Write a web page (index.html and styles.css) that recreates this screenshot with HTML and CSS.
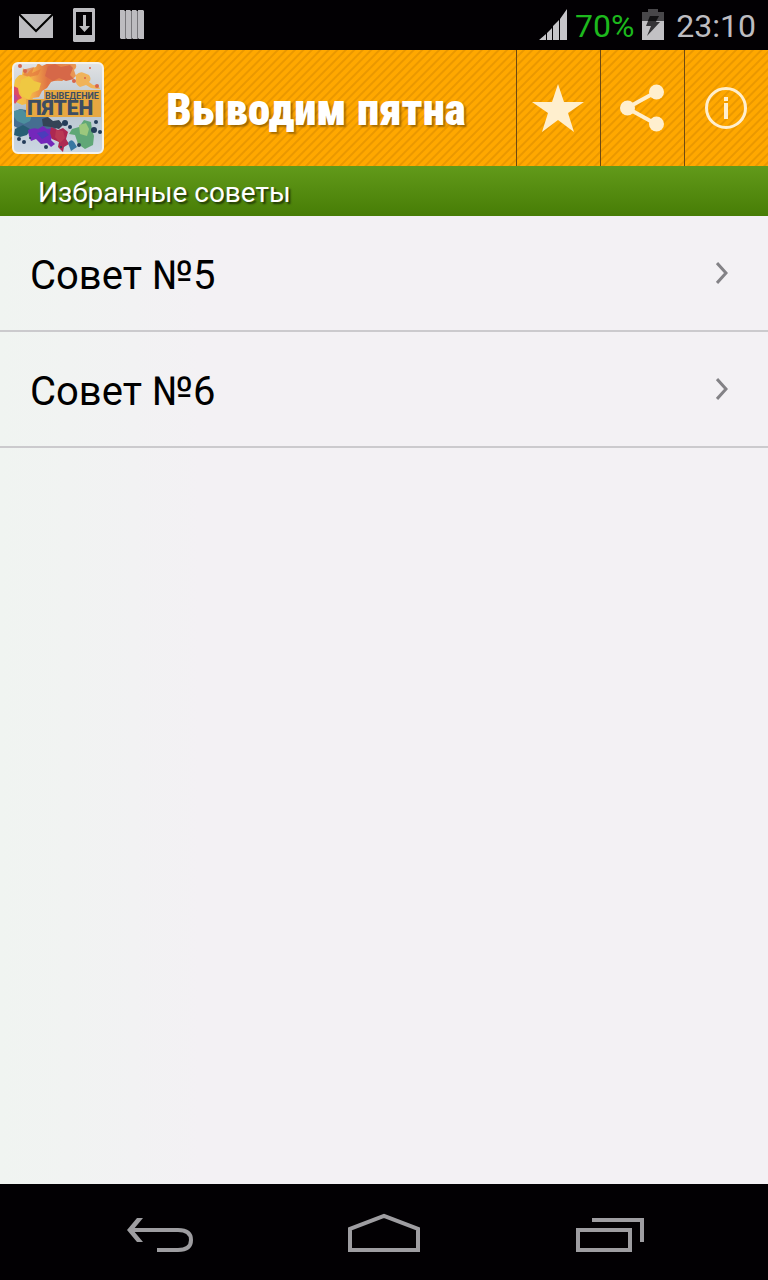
FILE: index.html
```html
<!doctype html>
<html lang="ru">
  <head>
    <meta charset="UTF-8" />
    <meta name="viewport" content="width=device-width, initial-scale=1.0" />
    <title>Выводим пятна</title>
    <link rel="stylesheet" href="styles.css">
  </head>
  <body>
    <!-- Status bar -->
    <div class="status-bar">
      <div class="status-notifications">
        <svg width="34" height="34" viewBox="0 0 34 34">
          <path d="M0 6h34v24H0z" fill="#bdbcc0" />
          <path d="M0 6l17 17L34 6" fill="none" stroke="#000" stroke-width="2" />
        </svg>
        <svg width="22" height="34" viewBox="0 0 22 34">
          <path fill="#bdbcc0" fill-rule="evenodd" d="M1 0h20l1 1v32l-1 1H1l-1-1V1zM3 4v23h16V4z" />
          <path fill="#bdbcc0" d="M10 7h3v11h4l-5.500 6L6 18h4z" />
        </svg>
        <svg width="24" height="34" viewBox="0 0 24 34">
          <path fill="#bdbcc0" d="M0 2h4l1 1v28H1l-1-1zM6 2h4l1 1v28H7l-1-1zM12 2h4l1 1v28h-4l-1-1zM18 2h5l1 1v28h-5l-1-1z" />
          <path stroke="#77767a" d="M5.500 3v28M11.500 3v28M17.500 3v28" />
        </svg>
      </div>
      <div class="status-system">
        <svg width="28" height="34" viewBox="0 0 28 34">
          <path fill="#c6c5c9" d="M0 32L7 26v6zM8 25l5-5v12H8zM14 18l6-6v20h-6zM21 11l7-10v31h-7z" />
        </svg>
        <span class="battery-percent">70%</span>
        <svg width="22" height="34" viewBox="0 0 22 34">
          <path fill="#48474a" d="M6 1h10v3h6v9H0V4h6z" />
          <path fill="#c2c1c4" d="M0 13h22v19H0z" />
          <path fill="#353437" d="M8 8h9l-3 6h4L5 28l4-10H4z" />
          <path fill="#121214" d="M8 8h9l-3 5H6z" />
        </svg>
        <span class="clock">23:10</span>
      </div>
    </div>

    <!-- Header -->
    <header class="header">
      <svg class="logo" viewBox="0 0 92 92" role="img" aria-label="Выведение пятен">
        <defs>
          <clipPath id="logoClip"><rect x="1" y="1" width="90" height="90" rx="5" /></clipPath>
          <linearGradient id="logoBg" x1="0" y1="0" x2="0" y2="1">
            <stop offset="0" stop-color="#e2e3e5" />
            <stop offset="0.500" stop-color="#b9c4cd" />
            <stop offset="1" stop-color="#ccd8e3" />
          </linearGradient>
          <linearGradient id="warm" x1="0" y1="0" x2="1" y2="0">
            <stop offset="0" stop-color="#f3c743" />
            <stop offset="0.300" stop-color="#f4b04b" />
            <stop offset="0.550" stop-color="#df7344" />
            <stop offset="1" stop-color="#ea9a55" />
          </linearGradient>
        </defs>
        <g clip-path="url(#logoClip)">
          <path fill="url(#logoBg)" d="M0 0h92v92H0z" />
          <!-- red, orange and yellow splashes -->
          <path fill="url(#warm)" d="M3 18q4-6 7-5l1-7 4 6q5-7 9-7l2-4 4 3q7-4 13-2l4-2 10 2 6-1q3 4-1 7l2 6q-4 5-9 2l-5 3q-7-1-11 1l-4 6-5 3-3 6-6 1-3 5-8 2-6-3-1-8q-4-3-1-8z" />
          <path fill="#d66848" d="M36 4l7-2 6 3 9-2 3 3-3 7 4 4-8 2-7-3-6 3-8-5z" />
          <path fill="#e4793f" opacity="0.700" d="M14 7l8-2-2 6 9-4-3 6-9 2-6-2z" />
          <path fill="#f0b35a" d="M64 13q4-4 8-2l5 2q3 4 0 7l4 3q6 0 7 4-4 0-9-1l-5-3-6 2q-5-3-4-7z" />
          <path fill="#efc842" d="M9 18l8-4 5 5 7 2-2 7-7 3-3 7-7-4-3-7z" />
          <path fill="#dd4b65" d="M1 24l5 2 1 6 3 4-4 2-3 4-3-5z" />
          <path fill="#b9499b" d="M0 32l4 1 2 4-6 3z" />
          <g fill="#d7654b">
            <circle cx="8" cy="4" r="2" /><circle cx="13" cy="9" r="2" /><circle cx="78" cy="6" r="1" />
            <circle cx="73" cy="16" r="1" /><circle cx="85" cy="24" r="2" /><circle cx="62" cy="19" r="2" />
          </g>
          <!-- teal and blue splashes -->
          <path fill="#456e91" d="M1 50l7-3 6 1 5-3 8 7 8 2 4 7 8-2 4 4-7 3-3 6-7-3-7 4-5-4-7 3-6-4-7-4z" />
          <path fill="#4c8f9d" d="M2 49l8-2 5 5 5 1-2 6-6 3-7-3-3-4z" />
          <path fill="#285e74" d="M3 67l8-4 7 4-3 6-7 2-6-2z" />
          <path fill="#344456" d="M30 57l6-2 5 4 6-1 4 5-4 4-8-2-8-1z" />
          <!-- violet, crimson and green splashes -->
          <path fill="#7427bb" d="M16 68q6-3 10-1l5-3 4 3 7-1q2 4-1 7l-2 5 4 4-4 3-4-4-6 1-5-5-5 2-2-5z" />
          <path fill="#4b3cbb" d="M25 71l8-2 4 4-7 4z" />
          <path fill="#ad2851" d="M39 65l7 3 5-2 5 4-2 7 3 5-5 3-1 5-5-5 1-5-7-3-2-6z" />
          <path fill="#ba3954" d="M44 68l7 1 2 7-5 5-5-6z" />
          <path fill="#60a777" d="M60 67l7-2 5-7 7 2 1 8 2 6-1 9-8 4-7-5-3-9-6-1z" />
          <path fill="#9bc87d" d="M67 63l7-2 3 6-2 7-7-2z" />
          <path fill="#3977a2" d="M56 81q3-5 6-1l3 5-6 4z" />
          <g fill="#243d59">
            <circle cx="82" cy="68" r="3" /><circle cx="88" cy="70" r="2" /><circle cx="84" cy="60" r="2" />
            <circle cx="53" cy="61" r="3" /><circle cx="58" cy="65" r="2" /><circle cx="12" cy="80" r="2" />
            <circle cx="7" cy="77" r="2" /><circle cx="18" cy="76" r="1" /><circle cx="67" cy="83" r="2" />
            <circle cx="49" cy="85" r="1" /><circle cx="34" cy="85" r="2" />
          </g>
          <path fill="#e7a841" d="M32 28h57v27H14V37h18z" />
        </g>
        <rect x="1" y="1" width="90" height="90" rx="5" fill="none" stroke="#f4f2ec" stroke-width="2" />
        <text class="logo-small" x="33" y="37">ВЫВЕДЕНИЕ</text>
        <text class="logo-large" x="15" y="53">ПЯТЕН</text>
      </svg>
      <h1 class="title">Выводим пятна</h1>
      <button class="header-button" type="button" aria-label="Избранное">
        <svg width="52" height="52" viewBox="0 0 52 52">
          <path fill="#ffefce" d="M26 2l6 18h20L36 31l6 19-16-12-16 12 6-19L0 20h20z" />
        </svg>
      </button>
      <button class="header-button" type="button" aria-label="Поделиться">
        <svg width="52" height="52" viewBox="0 0 52 52">
          <path d="M40 10L11 26l29 16" fill="none" stroke="#ffefce" stroke-width="4" />
          <g fill="#ffefce"><circle cx="40.500" cy="10" r="7.500" /><circle cx="11.500" cy="26" r="7.500" /><circle cx="40.500" cy="42" r="7.500" /></g>
        </svg>
      </button>
      <button class="header-button" type="button" aria-label="Информация">
        <svg width="52" height="52" viewBox="0 0 52 52">
          <circle cx="26" cy="26" r="19.500" fill="none" stroke="#ffefce" stroke-width="3" />
          <path fill="#ffefce" d="M24 15h4v4h-4zM24 21h4v16h-4z" />
        </svg>
      </button>
    </header>

    <h2 class="section-title">Избранные советы</h2>

    <!-- Favourite tips -->
    <main class="tips">
      <a class="tip" href="#tip-5">
        <span>Совет №5</span>
        <svg width="12" height="22" viewBox="0 0 12 22"><path d="M1 1l9 10-9 10" /></svg>
      </a>
      <a class="tip" href="#tip-6">
        <span>Совет №6</span>
        <svg width="12" height="22" viewBox="0 0 12 22"><path d="M1 1l9 10-9 10" /></svg>
      </a>
    </main>

    <!-- System navigation -->
    <nav class="nav-bar">
      <button class="nav-button" type="button" aria-label="Назад">
        <svg width="72" height="48" viewBox="0 0 72 48">
          <path d="M5 22h49q13 0 13 10t-13 10H33" />
          <path fill="#9e9da1" stroke="none" d="M13 10h6L9 22l10 12h-6L3 22z" />
        </svg>
      </button>
      <button class="nav-button" type="button" aria-label="Домой">
        <svg width="72" height="48" viewBox="0 0 72 48">
          <path d="M2 42V21L36 8l34 13v21z" />
        </svg>
      </button>
      <button class="nav-button" type="button" aria-label="Недавние">
        <svg width="72" height="48" viewBox="0 0 72 48">
          <path d="M6 22h52v20H6zM20 12h50v22" />
        </svg>
      </button>
    </nav>
  </body>
</html>
```
FILE: styles.css
```css
* { box-sizing: border-box; }
body {
  margin: 0;
  min-height: 100vh;
  display: flex;
  flex-direction: column;
  font-family: Roboto, "Liberation Sans", sans-serif;
  background: linear-gradient(to right, #f0f4f1, #f3f1f4 200px);
  color: #000;
}
svg { display: block; flex: none; }
button {
  display: flex;
  align-items: center;
  justify-content: center;
  padding: 0;
  border: none;
  background: none;
  cursor: pointer;
}

/* --- Status bar --- */
.status-bar {
  display: flex;
  justify-content: space-between;
  height: 50px;
  padding: 0 12px 0 19px;
  background-color: #020003;
  color: #bdbcc0;
  font-size: 32px;
  line-height: 48px;
}
.status-notifications {
  display: flex;
  align-items: center;
  gap: 20px;
}
.status-notifications svg + svg + svg { margin-left: 5px; }
.status-system {
  display: flex;
  align-items: center;
  gap: 8px;
}
.status-system span { padding-top: 2px; }
.battery-percent { color: #1db81d; }
.status-system .clock { padding-left: 4px; }

/* --- Header --- */
.header {
  display: flex;
  align-items: center;
  height: 116px;
  padding-left: 12px;
  background: repeating-linear-gradient(135deg, #ffa800 0, #ffa800 3px, #ea9800 4px, #ea9800 5px, #ffa800 6px);
}
.logo {
  width: 92px;
  height: 92px;
}
.logo text {
  font-family: Roboto, "Liberation Sans", sans-serif;
  font-weight: bold;
  fill: #3d4d61;
}
.logo .logo-small { font-size: 9px; }
.logo .logo-large {
  font-size: 21px;
  font-weight: 900;
}
.title {
  flex: 1;
  margin: 0;
  padding: 4px 0 0 12px;
  color: #fff;
  font-family: "Roboto Condensed", Roboto, sans-serif;
  font-size: 45px;
  font-weight: 900;
  line-height: 52px;
  text-align: center;
  white-space: nowrap;
  text-shadow: 2px 2px 2px rgba(80, 50, 0, 0.5);
}
.header-button {
  width: 84px;
  height: 100%;
  padding-right: 1px;
  border-left: 1px solid #6d4a12;
}

/* --- Section title --- */
.section-title {
  height: 50px;
  margin: 0;
  padding: 0 38px;
  background: linear-gradient(#629a1a, #477d06);
  color: #fff;
  font-size: 28px;
  font-weight: normal;
  line-height: 54px;
  text-shadow: 2px 2px 2px rgba(0, 0, 0, 0.6);
}

/* --- Tips list --- */
.tips { flex: 1; }
.tip {
  display: flex;
  align-items: center;
  justify-content: space-between;
  height: 116px;
  padding: 0 40px 0 30px;
  border-bottom: 2px solid #cbcacd;
  color: #000;
  font-size: 40px;
  line-height: 48px;
  text-decoration: none;
}
.tip span { padding-top: 6px; }
.tip path {
  fill: none;
  stroke: #838286;
  stroke-width: 3px;
}

/* --- System navigation --- */
.nav-bar {
  display: grid;
  grid-template-columns: repeat(3, 1fr);
  height: 96px;
  padding: 0 48px;
  background-color: #020003;
}
.nav-button svg {
  fill: none;
  stroke: #9e9da1;
  stroke-width: 4px;
}
```
